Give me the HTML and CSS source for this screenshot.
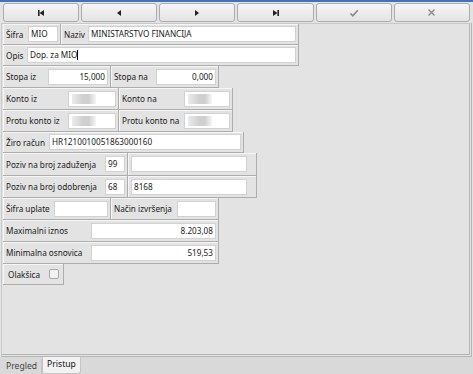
FILE: index.html
```html
<!DOCTYPE html>
<html lang="hr">
<head>
  <meta charset="UTF-8" />
  <title>Doprinosi</title>
  <link rel="stylesheet" href="styles.css">
</head>
<body>
  <div class="topline"></div>

  <div class="toolbar">
    <button class="nav"><svg width="8" height="8" viewBox="0 0 8 8"><rect x="1" y="1" width="1.6" height="6" fill="#222"/><polygon points="7,1 7,7 2.5,4" fill="#222"/></svg></button>
    <button class="nav"><svg width="8" height="8" viewBox="0 0 8 8"><polygon points="6,1 6,7 2,4" fill="#222"/></svg></button>
    <button class="nav"><svg width="8" height="8" viewBox="0 0 8 8"><polygon points="2,1 2,7 6,4" fill="#222"/></svg></button>
    <button class="nav"><svg width="8" height="8" viewBox="0 0 8 8"><polygon points="1,1 1,7 5.5,4" fill="#222"/><rect x="5.4" y="1" width="1.6" height="6" fill="#222"/></svg></button>
    <button class="nav"><svg width="10" height="8" viewBox="0 0 10 8"><path d="M1.5 4.5 L3.8 6.8 L8.8 1.2" stroke="#8a8a8a" stroke-width="1.7" fill="none"/></svg></button>
    <button class="nav"><svg width="9" height="9" viewBox="0 0 9 9"><path d="M1.5 1.5 L7.5 7.5 M7.5 1.5 L1.5 7.5" stroke="#8a8a8a" stroke-width="1.4" fill="none"/></svg></button>
  </div>

  <div class="panel">
    <div class="row h21">
      <div class="cell w58"><span>Šifra</span><div class="field w30">MIO</div></div>
      <div class="cell w238"><span>Naziv</span><div class="field w208">MINISTARSTVO FINANCIJA</div></div>
    </div>
    <div class="row h21">
      <div class="cell w296"><span>Opis</span><div class="field w269">Dop. za MIO<i class="caret"></i></div></div>
    </div>
    <div class="row">
      <div class="cell w108"><span>Stopa iz</span><div class="field w60 num">15,000</div></div>
      <div class="cell w108"><span>Stopa na</span><div class="field w60 num">0,000</div></div>
    </div>
    <div class="row">
      <div class="cell w116"><span>Konto iz</span><div class="field w48"><b class="blur"></b></div></div>
      <div class="cell w114"><span>Konto na</span><div class="field w46"><b class="blur"></b></div></div>
    </div>
    <div class="row">
      <div class="cell w116"><span>Protu konto iz</span><div class="field w48"><b class="blur"></b></div></div>
      <div class="cell w114"><span>Protu konto na</span><div class="field w46"><b class="blur"></b></div></div>
    </div>
    <div class="row h21">
      <div class="cell w241"><span>Žiro račun</span><div class="field w192">HR1210010051863000160</div></div>
    </div>
    <div class="row h23">
      <div class="cell w125"><span>Poziv na broj zaduženja</span><div class="field w20">99</div></div>
      <div class="cell w129"><div class="field w116"></div></div>
    </div>
    <div class="row">
      <div class="cell w125"><span>Poziv na broj odobrenja</span><div class="field w20">68</div></div>
      <div class="cell w129"><div class="field w116">8168</div></div>
    </div>
    <div class="row">
      <div class="cell w108"><span>Šifra uplate</span><div class="field w54"></div></div>
      <div class="cell w108"><span>Način izvršenja</span><div class="field w39"></div></div>
    </div>
    <div class="row">
      <div class="cell w216"><span>Maximalni iznos</span><div class="field w125 num">8.203,08</div></div>
    </div>
    <div class="row">
      <div class="cell w216"><span>Minimalna osnovica</span><div class="field w125 num">519,53</div></div>
    </div>
    <div class="row h21">
      <div class="cell w61 check"><span>Olakšica</span><i class="box"></i></div>
    </div>
  </div>

  <div class="tabs">
    <div class="tab">Pregled</div>
    <div class="tab active">Pristup</div>
  </div>
</body>
</html>
```

FILE: styles.css
```css
* {
  box-sizing: border-box;
}

body {
  margin: 0;
  width: 473px;
  height: 374px;
  overflow: hidden;
  background-color: #e3e3e3;
  font-family: "Noto Sans", "Liberation Sans", sans-serif;
  font-size: 8.2px;
  color: #1a1a1a;
  display: flex;
  flex-direction: column;
}

.topline {
  height: 2px;
  background-color: #3f73bd;
}

.toolbar {
  display: grid;
  grid-template-columns: repeat(6, 1fr);
  gap: 2px;
  padding: 1px 3px 0 3px;
}

.nav {
  height: 19px;
  border: 1px solid #acacac;
  border-radius: 3px;
  background: linear-gradient(#f5f5f5, #e4e4e4);
  display: flex;
  align-items: center;
  justify-content: center;
  padding: 0;
}

.panel {
  flex: 1;
  margin: 1px 1px 0 1px;
  border: 1px solid #c9c9c9;
  border-right: 3px double #b5b5b5;
  border-bottom: 3px double #b5b5b5;
  background-color: #e3e3e3;
  padding-left: 1px;
}

.row {
  display: flex;
  height: 22px;
}

.row.h21 {
  height: 21px;
}

.row.h23 {
  height: 23px;
}

.cell {
  display: flex;
  align-items: center;
  justify-content: space-between;
  padding: 0 2px 0 3px;
  border-right: 1px solid #adadad;
  border-bottom: 1px solid #adadad;
  box-shadow: inset 1px 1px 0 #f6f6f6;
  white-space: nowrap;
}

.cell.check {
  justify-content: flex-start;
  padding-left: 5px;
}

.field {
  height: 16px;
  line-height: 14px;
  padding: 0 2px;
  background-color: #ffffff;
  border: 1px solid #d2d2d2;
  overflow: hidden;
  position: relative;
}

.field.num {
  text-align: right;
}

.caret {
  display: inline-block;
  width: 1px;
  height: 10px;
  background-color: #000;
  vertical-align: -2px;
}

.blur {
  position: absolute;
  left: 3px;
  top: 2px;
  width: 24px;
  height: 10px;
  background: linear-gradient(to right, #ececec, #d0d0d0 45%, #cfcfcf 70%, #f6f6f6);
  filter: blur(0.6px);
}

.box {
  width: 10px;
  height: 10px;
  margin-left: 9px;
  border: 1px solid #a8a8a8;
  border-radius: 2px;
  background-color: #f2f2f2;
}

.w20 { width: 20px; }
.w30 { width: 30px; }
.w39 { width: 39px; }
.w46 { width: 46px; }
.w48 { width: 48px; }
.w54 { width: 54px; }
.w58 { width: 58px; }
.w60 { width: 60px; }
.w61 { width: 61px; }
.w108 { width: 108px; }
.w114 { width: 114px; }
.w116 { width: 116px; }
.w125 { width: 125px; }
.w129 { width: 129px; }
.w192 { width: 192px; }
.w208 { width: 208px; }
.w216 { width: 216px; }
.w238 { width: 238px; }
.w241 { width: 241px; }
.w269 { width: 269px; }
.w296 { width: 296px; }

.tabs {
  height: 17px;
  display: flex;
  align-items: flex-end;
  padding-left: 2px;
  background-color: #d9d9d9;
}

.tab {
  height: 15px;
  padding: 0 4px;
  line-height: 14px;
  color: #444;
  font-size: 8.6px;
  border-right: 1px solid #c4c4c4;
}

.tab.active {
  height: 17px;
  color: #111;
  background-color: #f2f2f2;
  border: 1px solid #c4c4c4;
  border-top: none;
  border-radius: 0 0 3px 3px;
}
```
